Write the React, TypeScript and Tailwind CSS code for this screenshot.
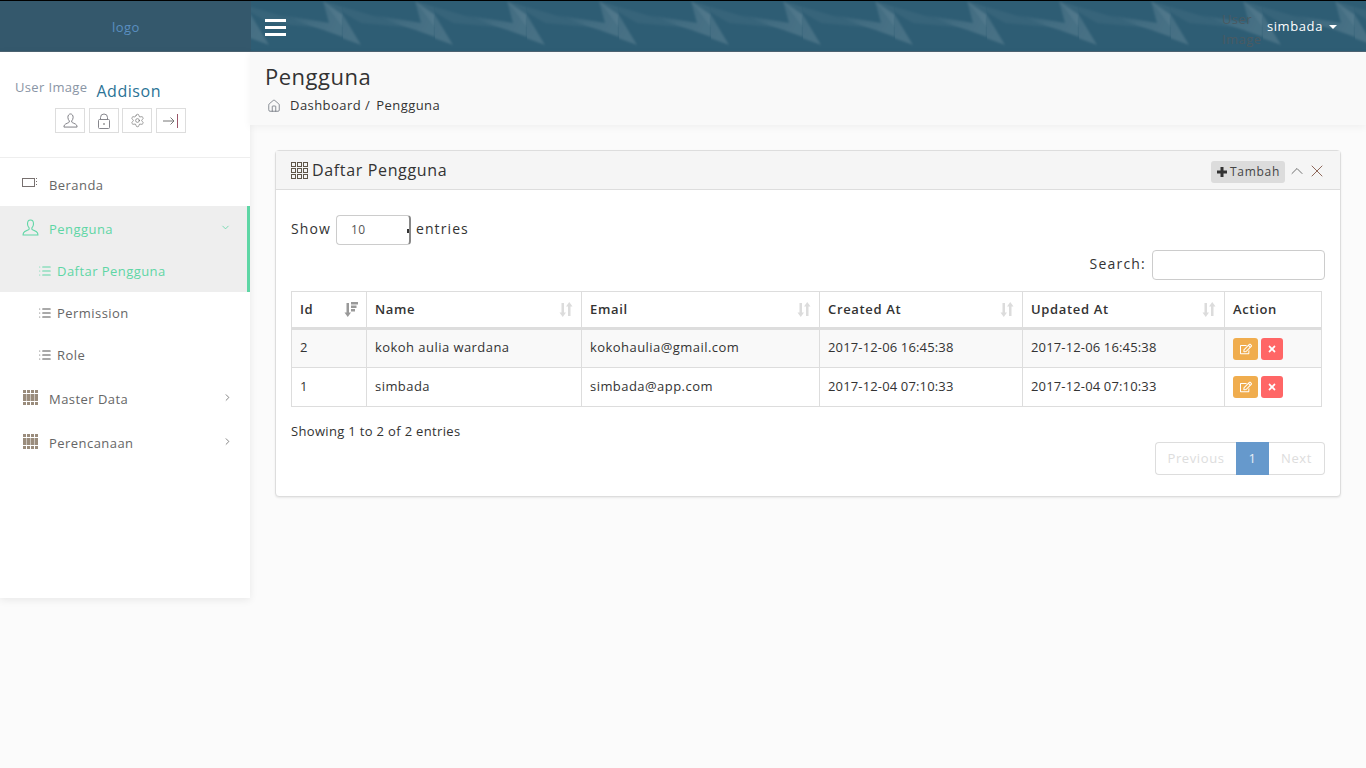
import React from 'react';
import { ChevronDown, ChevronRight, ChevronUp, House, List, Settings, X } from 'lucide-react';
import { FaRegEdit, FaTimes } from 'react-icons/fa';

const UserIcon = ({ size = 16, className = '' }: { size?: number; className?: string }) => (
  <svg width={size} height={size} viewBox="0 0 16 16" fill="none" stroke="currentColor" strokeWidth="1" className={className}>
    <path d="M5.2 4.6C5.2 2.6 6.4 1 8 1s2.8 1.6 2.8 3.6c0 1.6-.7 3-1.5 3.8v1.3c0 .6 4.2 1.600 5.200 3.200.3.6.5 1.300.5 2.100H1c0-.8.2-1.500.5-2.100 1-1.600 5.200-2.600 5.200-3.200V8.400C5.900 7.600 5.200 6.200 5.200 4.600z" />
  </svg>
);

const LockIcon = () => (
  <svg width="14" height="16" viewBox="0 0 14 16" fill="none" stroke="#86868c">
    <rect x="1.500" y="6.500" width="11" height="9" rx="1" />
    <path d="M3.500 6.500V4.500a3.500 3.500 0 0 1 7 0v2" />
    <path d="M7 10v2" stroke="#666" />
  </svg>
);

const LogoutIcon = () => (
  <svg width="17" height="14" viewBox="0 0 17 14" fill="none" stroke="#777">
    <path d="M0 7h11M7.500 3.500 11 7l-3.500 3.500" />
    <path d="M14.500 0v14" stroke="#9a5568" />
  </svg>
);

const GridIcon = () => {
  const cells = [];
  for (let y = 0; y < 3; y++) {
    for (let x = 0; x < 3; x++) {
      cells.push(<rect key={`${x}-${y}`} x={x * 6 + 0.5} y={y * 6 + 0.5} width="4" height="4" fill="none" stroke="#5f5648" />);
    }
  }
  return <svg width="17" height="17" viewBox="0 0 17 17" className="shrink-0">{cells}</svg>;
};

const DenseGridIcon = () => (
  <svg width="15" height="15" viewBox="0 0 15 15" className="ml-[1px]">
    {[0, 4, 8, 12].map((x) => (
      <g key={x} fill="#9a8c7c">
        <rect x={x} y="0" width="3" height="3" />
        <rect x={x} y="4" width="3" height="7" />
        <rect x={x} y="12" width="3" height="3" />
      </g>
    ))}
    <rect x="0" y="4" width="15" height="7" fill="#9a8c7c" opacity="0.5" />
  </svg>
);

const PlusIcon = () => (
  <svg width="10" height="10" viewBox="0 0 10 10" fill="#333" className="shrink-0">
    <path d="M3.500 0h3v3.500H10v3H6.500V10h-3V6.500H0v-3h3.500z" />
  </svg>
);

const SortIcon = () => (
  <svg width="14" height="15" viewBox="0 0 14 15" fill="#dcdcdc" className="shrink-0">
    <path d="M2.500 1h2.500v9.500h2L3.750 15 .5 10.500h2zM10.250 0l3.250 4.500h-2V14H9V4.500H7z" />
  </svg>
);

const SortActiveIcon = () => (
  <svg width="14" height="15" viewBox="0 0 14 15" fill="#999" className="shrink-0">
    <path d="M2.500 1h2.500v9.500h2L3.750 15 .5 10.500h2zM7 0h7v2.500H7zM7 3.500h5.500V6H7zM7 7h4v2.500H7z" />
  </svg>
);

const BannerPattern = () => (
  <svg className="absolute inset-0 w-full h-full" aria-hidden="true">
    <defs>
      <linearGradient id="wedge" x1="0" y1="0" x2="1" y2="0.3">
        <stop offset="0" stopColor="#ffffff" stopOpacity="0" />
        <stop offset="0.6" stopColor="#ffffff" stopOpacity="0.09" />
        <stop offset="1" stopColor="#ffffff" stopOpacity="0.12" />
      </linearGradient>
      <filter id="soft"><feGaussianBlur stdDeviation="1" /></filter>
      <pattern id="banner" width="92" height="51" patternUnits="userSpaceOnUse">
        <g filter="url(#soft)">
          <polygon points="72,0 92,14 92,36 30,14 78,22" fill="url(#wedge)" />
          <polygon points="-20,0 0,14 18,44 -62,14" fill="url(#wedge)" />
          <polygon points="-20,0 72,27 18,22" fill="#ffffff" opacity="0.045" />
          <polygon points="72,0 92,6 92,26" fill="#ffffff" opacity="0.05" />
        </g>
      </pattern>
    </defs>
    <rect width="100%" height="100%" fill="url(#banner)" />
  </svg>
);

const rows = [
  { id: 2, name: 'kokoh aulia wardana', email: 'kokohaulia@gmail.com', created: '2017-12-06 16:45:38', updated: '2017-12-06 16:45:38' },
  { id: 1, name: 'simbada', email: 'simbada@app.com', created: '2017-12-04 07:10:33', updated: '2017-12-04 07:10:33' },
];

const SubItem = ({ label, active = false }: { label: string; active?: boolean }) => (
  <div className={`h-[42px] pl-[38px] flex items-center gap-[5px] ${active ? 'text-[#5ed6a5]' : 'text-[#666]'}`}>
    <List size={14} strokeWidth={1.75} className={active ? '-mt-[1px]' : '-mt-[1px] text-[#555]'} />
    <span className="mt-[1px]">{label}</span>
  </div>
);

const MainItem = ({ icon, label, arrow = false }: { icon: React.ReactNode; label: string; arrow?: boolean }) => (
  <div className="h-[44px] pl-[22px] pr-[17px] flex items-center text-[#666]">
    <span className="w-[27px] shrink-0 flex -mt-[2px]">{icon}</span>
    <span className="flex-1 mt-[4px]">{label}</span>
    {arrow && <ChevronRight size={11} strokeWidth={1.75} className="-mt-[2px]" />}
  </div>
);

const HeadCell = ({ label, width, sort = true }: { label: string; width: string; sort?: boolean }) => (
  <th className={`${width} h-[37px] px-2 text-left font-semibold tracking-[0.65px] border border-[#ddd] border-b-[3px]`}>
    <div className="flex items-center justify-between">
      <span>{label}</span>
      {sort && <SortIcon />}
    </div>
  </th>
);

const ActionButtons = () => (
  <div className="flex gap-[3px]">
    <span className="w-[25px] h-[22px] rounded-[3px] bg-[#f0ad4e] text-white flex items-center justify-center"><FaRegEdit size={12} /></span>
    <span className="w-[22px] h-[22px] rounded-[3px] bg-[#ff6666] text-white flex items-center justify-center"><FaTimes size={10} /></span>
  </div>
);

export default function App() {
  return (
    <div className="min-h-[768px] bg-[#fbfbfb] text-[13px] tracking-[0.45px] text-[#333] font-['Open_Sans',sans-serif]">
      <header className="h-[52px] flex bg-[#2e5d74] border-t border-black border-b border-b-[#4d6473]">
        <div className="w-[251px] shrink-0 bg-[#34586c] flex items-center justify-center text-[#5a8fc0] pt-[4px] pl-[1px]">logo</div>
        <div className="relative flex-1 flex items-center justify-between overflow-hidden">
          <BannerPattern />
          <div className="relative ml-[14px] mt-[2px] flex flex-col gap-[4px]">
            <span className="block w-[21px] h-[3px] bg-white" />
            <span className="block w-[21px] h-[3px] bg-white" />
            <span className="block w-[21px] h-[3px] bg-white" />
          </div>
          <div className="relative flex items-center mr-[29px] text-white">
            <span className="w-[44px] leading-[20px] text-[#4a5a62] mr-[-1px] mt-[6px]">User Image</span>
            <span className="ml-[2px] mt-[2px] tracking-[0.6px]">simbada</span>
            <span className="ml-[6px] mt-[2px] border-x-[4px] border-x-transparent border-t-[4px] border-t-white" />
          </div>
        </div>
      </header>

      <div className="flex items-start">
        <aside className="w-[250px] h-[546px] shrink-0 bg-white shadow-[0_2px_8px_rgba(0,0,0,0.08)]">
          <div className="h-[106px] border-b border-[#eee] pt-[26px]">
            <div className="flex items-start pl-[15px]">
              <span className="text-[#8a95a5] mr-[9px] tracking-[0.35px]">User Image</span>
              <span className="text-[16px] text-[#2b7396] mt-[1px] tracking-[0.55px]">Addison</span>
            </div>
            <div className="flex pl-[55px] mt-[5px] text-[#7a7a80]">
              <span className="w-[30px] h-[25px] border border-[#ddd] flex items-center justify-center"><UserIcon size={15} /></span>
              <span className="w-[30px] h-[25px] ml-[4px] border border-[#ddd] flex items-center justify-center"><LockIcon /></span>
              <span className="w-[30px] h-[25px] ml-[3px] border border-[#ddd] flex items-center justify-center text-[#666]"><Settings size={15} strokeWidth={1} /></span>
              <span className="w-[30px] h-[25px] ml-[4px] border border-[#ddd] flex items-center justify-center"><LogoutIcon /></span>
            </div>
          </div>
          <nav className="pt-[4px]">
            <MainItem label="Beranda" icon={
              <svg width="17" height="12" viewBox="0 0 17 12" fill="none" stroke="#77706f"><rect x="0.500" y="1.500" width="12" height="8" /><path d="M14.500 1v1M14.500 4v1M14.500 7v1" /></svg>
            } />
            <div className="bg-[#eeeeee] border-r-[3px] border-r-[#5ed6a5]">
              <div className="h-[44px] pl-[22px] pr-[16px] flex items-center text-[#5ed6a5]">
                <span className="w-[27px] shrink-0 flex -mt-[2px]"><UserIcon size={17} /></span>
                <span className="flex-1 mt-[4px]">Pengguna</span>
                <ChevronDown size={11} strokeWidth={1.75} className="-mt-[2px]" />
              </div>
              <SubItem label="Daftar Pengguna" active />
            </div>
            <SubItem label="Permission" />
            <SubItem label="Role" />
            <MainItem label="Master Data" arrow icon={<DenseGridIcon />} />
            <MainItem label="Perencanaan" arrow icon={<DenseGridIcon />} />
          </nav>
        </aside>

        <main className="flex-1 min-w-0">
          <div className="h-[73px] bg-[#f9f9f9] shadow-[0_2px_8px_rgba(0,0,0,0.05)] pl-[15px] pt-[9px]">
            <h1 className="text-[22px] leading-[30px] text-[#333] tracking-[0.5px]">Pengguna</h1>
            <div className="flex items-center mt-[5px] text-[#333]">
              <House size={14} strokeWidth={1.25} className="ml-[2px] mr-[9px] text-[#5f6670]" />
              <span>Dashboard /</span>
              <span className="ml-[6px]">Pengguna</span>
            </div>
          </div>

          <section className="mt-[25px] ml-[25px] mr-[25px] bg-white border border-[#ddd] rounded-[4px] shadow-[0_1px_2px_rgba(0,0,0,0.08)]">
            <div className="h-[39px] bg-[#f5f5f5] border-b border-[#ddd] flex items-center pl-[15px] pr-[13px]">
              <GridIcon />
              <h2 className="text-[16px] ml-[4px] flex-1 tracking-[0.65px]">Daftar Pengguna</h2>
              <span className="w-[74px] h-[22px] rounded-[3px] bg-[#dcdcdc] pl-[6px] mt-[3px] flex items-center gap-[3px] text-[12px] text-[#444] tracking-[0.7px]"><PlusIcon />Tambah</span>
              <ChevronUp size={20} strokeWidth={1} className="ml-[2px] mt-[1px] text-[#555]" />
              <X size={20} strokeWidth={1} className="mt-[1px] text-[#7a4a3a]" />
            </div>

            <div className="px-[15px] pt-[25px] pb-[21px]">
              <div className="flex items-center h-[30px] text-[14px] tracking-[1.1px]">
                <span className="-mt-[4px]">Show</span>
                <div className="relative w-[75px] h-[30px] ml-[5px] mr-[5px] border border-[#ccc] border-r-[2px] border-r-[#888] rounded-[4px] flex items-center pl-[14px] text-[12px] tracking-[0.45px] text-[#555]">
                  10
                  <span className="absolute right-[0px] top-[13px] w-[2px] h-[4px] bg-[#333]" />
                </div>
                <span className="-mt-[4px]">entries</span>
              </div>
              <div className="flex justify-end items-center mt-[5px] text-[14px] tracking-[1.2px]">
                <span className="-mt-[3px]">Search:</span>
                <div className="w-[173px] h-[30px] ml-[6px] border border-[#ccc] rounded-[4px] bg-white" />
              </div>
              <table className="w-[1030px] mt-[11px] table-fixed border-collapse">
                <thead>
                  <tr>
                    <th className="w-[75px] h-[37px] px-2 text-left font-semibold tracking-[0.65px] border border-[#ddd] border-b-[3px]">
                      <div className="flex items-center justify-between">
                        <span>Id</span>
                        <SortActiveIcon />
                      </div>
                    </th>
                    <HeadCell label="Name" width="w-[215px]" />
                    <HeadCell label="Email" width="w-[238px]" />
                    <HeadCell label="Created At" width="w-[203px]" />
                    <HeadCell label="Updated At" width="w-[202px]" />
                    <HeadCell label="Action" width="w-[97px]" sort={false} />
                  </tr>
                </thead>
                <tbody>
                  {rows.map((row, idx) => {
                    const cell = `px-2 border border-[#ddd] ${idx === 0 ? 'pb-[2px]' : ''}`;
                    return (
                      <tr key={row.id} className={idx === 0 ? 'bg-[#f9f9f9]' : 'bg-white'}>
                        <td className={`h-[39px] ${cell}`}>{row.id}</td>
                        <td className={cell}>{row.name}</td>
                        <td className={cell}>{row.email}</td>
                        <td className={`${cell} tracking-[0.15px]`}>{row.created}</td>
                        <td className={`${cell} tracking-[0.15px]`}>{row.updated}</td>
                        <td className="px-2 border border-[#ddd]"><ActionButtons /></td>
                      </tr>
                    );
                  })}
                </tbody>
              </table>
              <div className="mt-[14px] leading-[20px] tracking-[0.33px]">Showing 1 to 2 of 2 entries</div>
              <div className="flex justify-end mt-[1px]">
                <div className="flex h-[33px] items-stretch text-[#dddddd] tracking-[0.6px]">
                  <span className="w-[81px] border border-[#ddd] border-r-0 rounded-l-[4px] flex items-center justify-center">Previous</span>
                  <span className="w-[33px] bg-[#6699cc] text-[#e8eef5] flex items-center justify-center">1</span>
                  <span className="w-[56px] border border-[#ddd] border-l-0 rounded-r-[4px] flex items-center justify-center">Next</span>
                </div>
              </div>
            </div>
          </section>
        </main>
      </div>
    </div>
  );
}
